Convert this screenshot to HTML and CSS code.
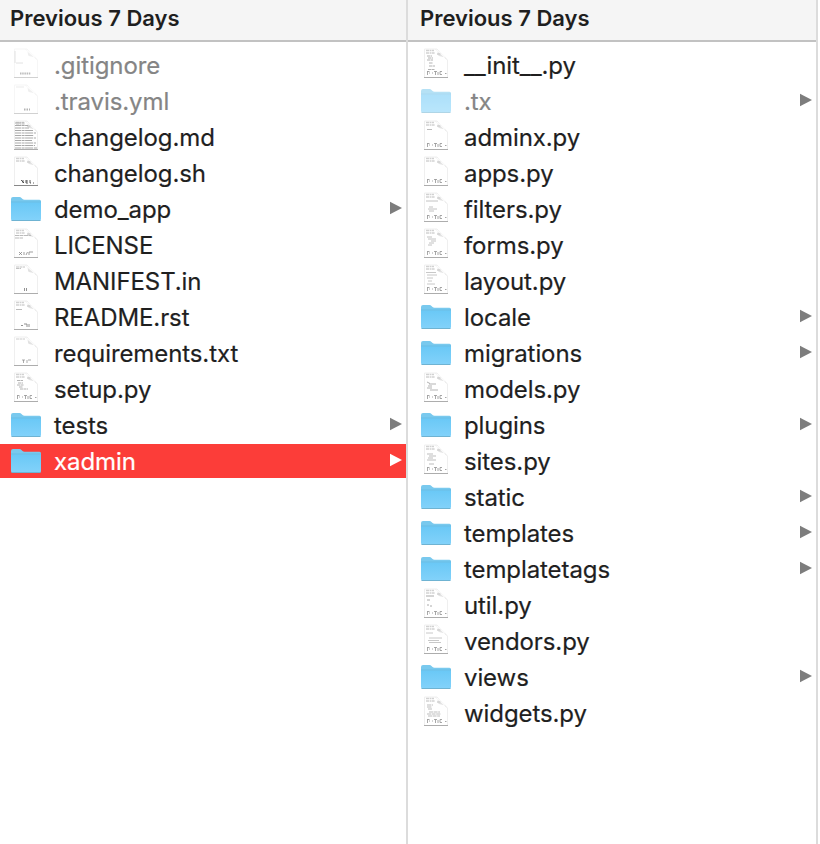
FILE: index.html
```
<!DOCTYPE html>
<html lang="en">
<head>
<meta charset="utf-8">
<title>xadmin</title>
<link rel="stylesheet" href="styles.css">
</head>
<body>
<svg class="defs" aria-hidden="true">
  <defs>
    <linearGradient id="blue" x1="0" y1="0" x2="0" y2="1"><stop offset="0" stop-color="#6ac8f6"/><stop offset="1" stop-color="#82d2fa"/></linearGradient>
    <symbol id="folder" viewBox="0 0 32 26">
      <path d="M1 3Q1 1 3 1h6.500q1.200 0 2 1l1 1q.8.700 2 .7H29.500q1.500 0 1.500 1.500V10H1z" fill="#79c9ee"/>
      <path d="M1 6.500h30V23q0 1.500-1.500 1.500h-27Q1 24.500 1 23z" fill="url(#blue)"/>
      <path d="M1 6h30" stroke="#66bde7" stroke-width="1"/>
      <path d="M1.500 24.500h29" stroke="#6fb3d2" stroke-width="1"/>
    </symbol>
    <symbol id="page" viewBox="0 0 24 31">
      <path d="M.5 29V1H13L23.500 12V29" fill="#fff" stroke="#efefef"/>
      <path d="M11 1c4 1 2 6 4 7 3 1 6 0 8 4z" fill="#e2e2e2"/>
      <path d="M14 3l7 6" stroke="#fafafa" stroke-width="1.500"/>
      <path d="M0 29.500h24" stroke="#adadad"/>
    </symbol>
    <symbol id="head" viewBox="0 0 24 31"><path d="M2 2.500h8M2 5h9M13 6h4" stroke="#d2d2d2" stroke-width="1.300" stroke-dasharray="3 .6 1.500 .5"/></symbol>
    <symbol id="python" viewBox="0 0 24 31"><path d="M3.500 23v4M3.500 23.500h2M5 25h1M8 25h1M10 23.500h3M11.500 23.500v3.500M14 24v3M18 23.500h-2v3h2M21 25.500h1.500" fill="none" stroke="#929292" stroke-width=".8"/></symbol>
    <symbol id="arrow" viewBox="0 0 13 14"><path d="M0 .3L13 7L0 13.700z" fill="currentColor"/></symbol>
  </defs>
</svg>
<main class="browser">
  <section class="column">
    <h2 class="heading">Previous 7 Days</h2>
    <ul class="list">
      <li class="row dim"><svg class="file"><use href="#page"/><path d="M2 15h7M1 3v12" stroke="#ccc"/><path d="M6 25.500h11" stroke="#888" stroke-width="2" stroke-dasharray="1.500 .7"/></svg><span class="name">.gitignore</span></li>
      <li class="row dim"><svg class="file"><use href="#page"/><path d="M2 3h8" stroke="#ddd"/><path d="M10 25.500h6" stroke="#777" stroke-width="2" stroke-dasharray="1.500 1"/></svg><span class="name">.travis.yml</span></li>
      <li class="row"><svg class="file"><use href="#page"/><use href="#head"/><path d="M1 3h10M1 5.500h13M1 8h14M1 10.500h18M1 13h21M1 15.500h19M1 18h21M1 20.500h17M1 23h21M1 25.500h20M1 28h22" stroke="#a9a9a9" stroke-width="1.200" stroke-dasharray="6 .6 3 .5 8 .8"/></svg><span class="name">changelog.md</span></li>
      <li class="row"><svg class="file"><use href="#page"/><use href="#head"/><path d="M7 24l3 3M9 24v3M12 24v3h2M12 25h2M16 24v3h1M19 27h1" fill="none" stroke="#333" stroke-width=".8"/><path d="M0 29.500h24" stroke="#888"/></svg><span class="name">changelog.sh</span></li>
      <li class="row"><svg class="folder"><use href="#folder"/></svg><span class="name">demo_app</span><svg class="arrow"><use href="#arrow"/></svg></li>
      <li class="row"><svg class="file"><use href="#page"/><use href="#head"/><path d="M1 7.500h16M1 10h8" stroke="#bbb" stroke-dasharray="4 .5"/><path d="M5 24l3 3M8 24l-3 3M10 24v3M12 27l1.500-3M15 24v3M15 24h4" fill="none" stroke="#777" stroke-width=".7"/></svg><span class="name">LICENSE</span></li>
      <li class="row"><svg class="file"><use href="#page"/><path d="M2 3h9M2 4.500h5" stroke="#c2c2c2" stroke-dasharray="3 .5"/><path d="M10.500 24v3M12.500 24v3" stroke="#777" stroke-width=".8"/></svg><span class="name">MANIFEST.in</span></li>
      <li class="row"><svg class="file"><use href="#page"/><use href="#head"/><path d="M2 9.500h6" stroke="#bbb"/><path d="M7 25.500h2M10 24h3v3M15 24v3" fill="none" stroke="#777" stroke-width=".8"/></svg><span class="name">README.rst</span></li>
      <li class="row"><svg class="file"><use href="#page"/><path d="M2 3h9" stroke="#ccc" stroke-dasharray="3 .5"/><path d="M8 24h3M9.500 24v3M13 24v3M14 24h3" fill="none" stroke="#888" stroke-width=".7"/></svg><span class="name">requirements.txt</span></li>
      <li class="row"><svg class="file"><use href="#page"/><use href="#head"/><use href="#python"/><path d="M3 8.500h6M4 11h5M3 13h7M5 15h4M6 17h8" stroke="#aaa" stroke-width=".9" stroke-dasharray="3 .5"/></svg><span class="name">setup.py</span></li>
      <li class="row"><svg class="folder"><use href="#folder"/></svg><span class="name">tests</span><svg class="arrow"><use href="#arrow"/></svg></li>
      <li class="row selected"><svg class="folder"><use href="#folder"/></svg><span class="name">xadmin</span><svg class="arrow"><use href="#arrow"/></svg></li>
    </ul>
  </section>
  <section class="column second">
    <h2 class="heading">Previous 7 Days</h2>
    <ul class="list">
      <li class="row"><svg class="file"><use href="#page"/><use href="#head"/><use href="#python"/><path d="M3 8h5M4 10h5M3 12h6M5 15h4M5 18h6M4 21.500h7" stroke="#aaa" stroke-width=".9" stroke-dasharray="3 .5"/></svg><span class="name">__init__.py</span></li>
      <li class="row dim"><svg class="folder"><use href="#folder"/></svg><span class="name">.tx</span><svg class="arrow"><use href="#arrow"/></svg></li>
      <li class="row"><svg class="file"><use href="#page"/><use href="#head"/><use href="#python"/><path d="M3 9.500h5" stroke="#bbb"/></svg><span class="name">adminx.py</span></li>
      <li class="row"><svg class="file"><use href="#page"/><use href="#head"/><use href="#python"/></svg><span class="name">apps.py</span></li>
      <li class="row"><svg class="file"><use href="#page"/><use href="#head"/><use href="#python"/><path d="M2 9h12M5 15h4M4 17h9M5 19h5" stroke="#bbb" stroke-width=".9"/></svg><span class="name">filters.py</span></li>
      <li class="row"><svg class="file"><use href="#page"/><use href="#head"/><use href="#python"/><path d="M3 9h5M4 11h8M7 13h5M5 15h5M4 17h4" stroke="#bbb" stroke-width=".9"/></svg><span class="name">forms.py</span></li>
      <li class="row"><svg class="file"><use href="#page"/><use href="#head"/><use href="#python"/><path d="M2 8.500h10M3 11h10M3 14h6M4 17h4M3 20h8" stroke="#c2c2c2" stroke-width=".9"/></svg><span class="name">layout.py</span></li>
      <li class="row"><svg class="folder"><use href="#folder"/></svg><span class="name">locale</span><svg class="arrow"><use href="#arrow"/></svg></li>
      <li class="row"><svg class="folder"><use href="#folder"/></svg><span class="name">migrations</span><svg class="arrow"><use href="#arrow"/></svg></li>
      <li class="row"><svg class="file"><use href="#page"/><use href="#head"/><use href="#python"/><path d="M3 10l3 1.500M5 12h7M4 14h4M3 16h5M6 18h8" stroke="#aaa" stroke-width=".9"/></svg><span class="name">models.py</span></li>
      <li class="row"><svg class="folder"><use href="#folder"/></svg><span class="name">plugins</span><svg class="arrow"><use href="#arrow"/></svg></li>
      <li class="row"><svg class="file"><use href="#page"/><use href="#head"/><use href="#python"/><path d="M3 10h6M5 12h7M4 14h5M3 16h9M5 20h5" stroke="#b5b5b5" stroke-width=".9"/></svg><span class="name">sites.py</span></li>
      <li class="row"><svg class="folder"><use href="#folder"/></svg><span class="name">static</span><svg class="arrow"><use href="#arrow"/></svg></li>
      <li class="row"><svg class="folder"><use href="#folder"/></svg><span class="name">templates</span><svg class="arrow"><use href="#arrow"/></svg></li>
      <li class="row"><svg class="folder"><use href="#folder"/></svg><span class="name">templatetags</span><svg class="arrow"><use href="#arrow"/></svg></li>
      <li class="row"><svg class="file"><use href="#page"/><use href="#head"/><use href="#python"/><path d="M2 8h8M3 12h3M3 17h2M6 18h2" stroke="#aaa"/></svg><span class="name">util.py</span></li>
      <li class="row"><svg class="file"><use href="#page"/><use href="#head"/><use href="#python"/><path d="M2 9h7M5 14h13M4 16.500h11M5 18.500h12" stroke="#c2c2c2" stroke-width=".9"/></svg><span class="name">vendors.py</span></li>
      <li class="row"><svg class="folder"><use href="#folder"/></svg><span class="name">views</span><svg class="arrow"><use href="#arrow"/></svg></li>
      <li class="row"><svg class="file"><use href="#page"/><use href="#head"/><use href="#python"/><path d="M3 9h6M3 11h5M4 13h4M5 16h11M3 18h14M4 20h12" stroke="#b5b5b5" stroke-width=".9" stroke-dasharray="4 .6"/></svg><span class="name">widgets.py</span></li>
    </ul>
  </section>
</main>
</body>
</html>
```
FILE: styles.css
```
* { box-sizing: border-box; }
body { margin: 0; background: #fff; color: #1f1f1f; font-family: Inter, "Liberation Sans", sans-serif; overflow: hidden; }
.defs { position: absolute; width: 0; height: 0; }
.browser { display: grid; grid-template-columns: 408px 410px; height: 844px; }
.column { border-right: 2px solid #dcdcdc; }
.heading { margin: 0; height: 42px; padding: 0 10px; background: #f5f5f5; border-bottom: 2px solid #c2c2c2; font-size: 22px; line-height: 37px; font-weight: 600; white-space: nowrap; }
.second .heading { padding-left: 12px; }
.list { list-style: none; margin: 0; padding: 6px 0 0; display: flex; flex-direction: column; gap: 2px; }
.row { display: flex; align-items: center; height: 34px; padding: 0 4px 0 10px; }
.second .row { padding-left: 12px; }
.folder { width: 32px; height: 26px; flex: none; margin: 0 12px 1px 0; }
.file { width: 24px; height: 31px; flex: none; margin: 0 16px 3px 4px; }
.name { flex: 1; padding-top: 2px; font-size: 24px; line-height: 34px; letter-spacing: -0.09px; white-space: nowrap; -webkit-text-stroke: 0.2px currentColor; }
.arrow { width: 12px; height: 14px; flex: none; color: #7d7d7d; margin-bottom: 2px; }
.dim .name { color: #858585; }
.dim .folder, .dim .file { opacity: .55; }
.selected { background: #fc3d39; color: #fff; }
.selected .arrow { color: #fff; }
```
